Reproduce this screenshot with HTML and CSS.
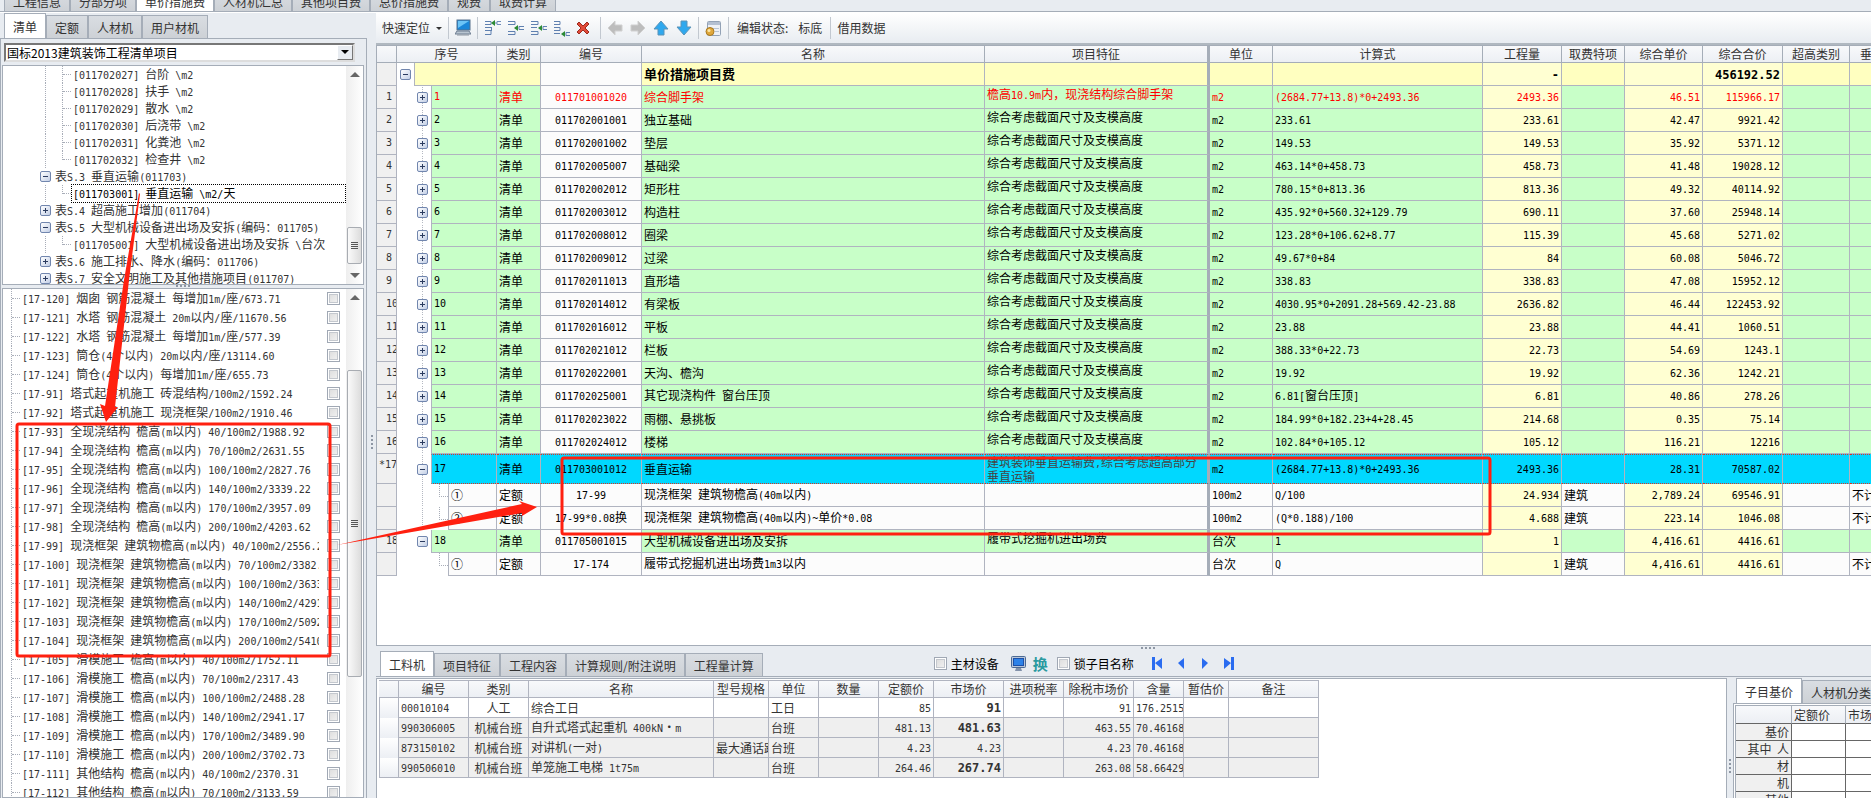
FILE: index.html
```html
<!DOCTYPE html>
<html lang="zh-CN">
<head>
<meta charset="utf-8">
<title>单价措施费</title>
<link rel="stylesheet" href="styles.css">
</head>
<body>
<nav class="tabs top-tabs">
  <button class="tab">工程信息</button><button class="tab">分部分项</button><button class="tab active">单价措施费</button><button class="tab">人材机汇总</button><button class="tab">其他项目费</button><button class="tab">总价措施费</button><button class="tab">规费</button><button class="tab">取费计算</button>
</nav>
<div class="workspace">
  <aside class="sidebar">
    <nav class="tabs side-tabs">
      <button class="tab active">清单</button><button class="tab">定额</button><button class="tab">人材机</button><button class="tab">用户材机</button>
    </nav>
    <div class="side-body">
      <div class="combo">
        <select aria-label="清单项目"><option>国标2013建筑装饰工程清单项目</option></select>
        <span class="combo-arrow"></span>
      </div>
      <div class="box outline-box">
        <div class="outline" id="outline"></div>
        <div class="scroll scroll-a"><i class="up"></i><b class="thumb"></b><i class="down"></i></div>
      </div>
      <div class="dots-h"><i></i><i></i><i></i><i></i></div>
      <div class="box quota-box">
        <div class="quota" id="quota"></div>
        <div class="scroll scroll-b"><i class="up"></i><b class="thumb"></b></div>
      </div>
    </div>
  </aside>
  <div class="dots-v"><i></i><i></i><i></i><i></i></div>
  <main class="main">
    <div class="toolbar">
      <button class="tool">快速定位<span class="caret"></span></button>
      <span class="sep"></span>
      <button class="tool" aria-label="计算机"><svg width="16" height="18" viewBox="0 0 16 18"><rect x="2" y="1" width="13" height="10" fill="#1a86d8" stroke="#57708c"/><path d="M3 2h11L3 9z" fill="#6cc4f6"/><path d="M2 12h12l2 3H0z" fill="#b8c4d0" stroke="#6c7c90"/><path d="M2 16h12" stroke="#8a94a0"/></svg></button>
      <span class="sep"></span>
      <button class="tool" aria-label="上方插入"><svg width="18" height="18" viewBox="0 0 18 18"><path d="M1 2.500h6v3H1M1 8.500h6M1 11.500h6v4H1M7.500 8v4" stroke="#5f80b0" fill="none"/><path d="M17 2.500h-4v3h4M10 4h3" stroke="#6f8cba" fill="none"/><path d="M7 4l4-3v6z" fill="#2c8a34"/></svg></button>
      <button class="tool" aria-label="插入"><svg width="18" height="18" viewBox="0 0 18 18"><path d="M1 2.500h7v3H1M1 12.500h7v3H1M8 9h3M17 7.500h-5v3h5" stroke="#5f80b0" fill="none"/><path d="M7 9l4-3v6z" fill="#2c8a34"/></svg></button>
      <button class="tool" aria-label="同级插入"><svg width="18" height="18" viewBox="0 0 18 18"><path d="M1 2.500h7v3H1M1 8.500h6M1 12.500h7v3H1M17 7.500h-4v3h4" stroke="#5f80b0" fill="none"/><path d="M8 9l4-3v6z" fill="#2c8a34"/></svg></button>
      <button class="tool" aria-label="下方插入"><svg width="18" height="18" viewBox="0 0 18 18"><path d="M1 2.500h6v3H1M1 8.500h6v3H1M1 14.500h6M17 13.500h-4v3h4" stroke="#5f80b0" fill="none"/><path d="M8 15l4-3v6z" fill="#2c8a34"/></svg></button>
      <button class="tool del" aria-label="删除"><svg width="14" height="14" viewBox="0 0 14 14"><path d="M1 3l2-2 4 4 4-4 2 2-4 4 4 4-2 2-4-4-4 4-2-2 4-4z" fill="#e04a38" stroke="#9c2a1e"/></svg></button>
      <span class="sep"></span>
      <button class="tool" aria-label="左移"><svg width="16" height="16" viewBox="0 0 16 16"><path d="M8 1v4h7v6H8v4L1 8z" fill="#bdbdbd" stroke="#d0d0d0"/></svg></button>
      <button class="tool" aria-label="右移"><svg width="16" height="16" viewBox="0 0 16 16"><path d="M8 1v4H1v6h7v4l7-7z" fill="#bdbdbd" stroke="#d0d0d0"/></svg></button>
      <button class="tool" aria-label="上移"><svg width="16" height="16" viewBox="0 0 16 16"><path d="M8 1l7 8h-4v6H5V9H1z" fill="#2fa8ee" stroke="#5b93b8"/></svg></button>
      <button class="tool" aria-label="下移"><svg width="16" height="16" viewBox="0 0 16 16"><path d="M8 15l7-8h-4V1H5v6H1z" fill="#2fa8ee" stroke="#5b93b8"/></svg></button>
      <span class="sep"></span>
      <button class="tool" aria-label="费用"><svg width="17" height="17" viewBox="0 0 17 17"><rect x="2.500" y="1.500" width="13" height="14" rx="1" fill="#eef1f6" stroke="#93a2b6"/><path d="M3 3.500h12" stroke="#b4c0d2" stroke-width="3"/><path d="M8 8.500h6M10 11.500h4" stroke="#b8c4d4"/><circle cx="5" cy="11.500" r="4" fill="#e0a83c" stroke="#a87820"/><circle cx="4" cy="10.500" r="1.500" fill="#fbe6a8"/></svg></button>
      <span class="sep"></span>
      <span class="tool-text">编辑状态:</span>
      <button class="tool mark">标底</button>
      <span class="sep"></span>
      <button class="tool">借用数据</button>
    </div>
    <div class="grid-pane">
      <table class="grid">
        <colgroup><col class="w20"><col class="w100"><col class="w44"><col class="w101"><col class="w343"><col class="w225"><col class="w63"><col class="w210"><col class="w79"><col class="w63"><col class="w78"><col class="w80"><col class="w67"><col class="w68"></colgroup>
        <thead><tr><th></th><th>序号</th><th>类别</th><th>编号</th><th>名称</th><th class="thick">项目特征</th><th>单位</th><th>计算式</th><th>工程量</th><th>取费特项</th><th>综合单价</th><th>综合合价</th><th>超高类别</th><th class="cut">垂</th></tr></thead>
        <tbody id="grid"></tbody>
      </table>
    </div>
    <div class="dots-h wide"><i></i><i></i><i></i><i></i></div>
    <div class="detail-bar">
      <nav class="tabs detail-tabs">
        <button class="tab active">工料机</button><button class="tab">项目特征</button><button class="tab">工程内容</button><button class="tab">计算规则/附注说明</button><button class="tab">工程量计算</button>
      </nav>
      <div class="options">
        <label class="check"><input type="checkbox">主材设备</label>
        <button class="tool" aria-label="显示"><svg width="15" height="16" viewBox="0 0 15 16"><rect x=".5" y=".5" width="14" height="11" rx="1" fill="#b9c6d8" stroke="#4c6a94"/><rect x="2.500" y="2.500" width="10" height="7" fill="#2d82e8" stroke="#1c50a8"/><path d="M5 12h5l1 3H4z" fill="#8292aa"/></svg></button>
        <button class="tool swap">换</button>
        <label class="check"><input type="checkbox">锁子目名称</label>
        <div class="pager">
          <button aria-label="第一条"><svg width="10" height="13" viewBox="0 0 10 13"><path d="M0 0h3v13H0zM10 1v11L3 6z" fill="#2a6cf0"/></svg></button>
          <button aria-label="上一条"><svg width="10" height="13" viewBox="0 0 10 13"><path d="M8 1v11L2 6z" fill="#2a6cf0"/></svg></button>
          <button aria-label="下一条"><svg width="10" height="13" viewBox="0 0 10 13"><path d="M2 1v11l6-6z" fill="#2a6cf0"/></svg></button>
          <button aria-label="最后一条"><svg width="10" height="13" viewBox="0 0 10 13"><path d="M7 0h3v13H7zM0 1v11l7-6z" fill="#2a6cf0"/></svg></button>
        </div>
      </div>
    </div>
    <div class="detail">
      <div class="detail-pane">
        <table class="parts">
          <colgroup><col class="w20"><col class="w70"><col class="w60"><col class="w185"><col class="w55"><col class="w50"><col class="w60"><col class="w55"><col class="w70"><col class="w60"><col class="w70"><col class="w50"><col class="w45"><col class="w90"></colgroup>
          <thead><tr><th></th><th>编号</th><th>类别</th><th>名称</th><th>型号规格</th><th>单位</th><th>数量</th><th>定额价</th><th>市场价</th><th>进项税率</th><th>除税市场价</th><th>含量</th><th>暂估价</th><th>备注</th></tr></thead>
          <tbody id="parts"></tbody>
        </table>
      </div>
      <div class="dots-v low"><i></i><i></i><i></i><i></i></div>
      <section class="price">
        <nav class="tabs price-tabs"><button class="tab active">子目基价</button><button class="tab">人材机分类</button></nav>
        <div class="price-body">
          <table class="base">
            <colgroup><col class="w56"><col class="w54"><col class="w54"></colgroup>
            <thead><tr><th></th><th>定额价</th><th>市场价</th></tr></thead>
            <tbody>
              <tr><th>基价</th><td></td><td></td></tr>
              <tr><th>其中&nbsp; 人</th><td></td><td></td></tr>
              <tr><th>材</th><td></td><td></td></tr>
              <tr><th>机</th><td></td><td></td></tr>
              <tr><th>其他</th><td></td><td></td></tr>
            </tbody>
          </table>
        </div>
      </section>
    </div>
  </main>
</div>
<svg class="marks" width="1871" height="798" viewBox="0 0 1871 798" aria-hidden="true">
  <g fill="none" stroke="#ff2010" stroke-width="3">
    <rect x="17" y="424" width="313" height="232" rx="2"/>
    <rect x="562" y="458" width="928" height="76" rx="2"/>
  </g>
  <g fill="#ff2010">
    <path d="M139 193l1 1-11 86-14 127 3 0-12 15-6-18 5 2 19-126z"/>
    <path d="M337 545l185-41-3-3 18 6-15 9 0-3z"/>
  </g>
</svg>
<script src="app.js"></script>
</body>
</html>
```
FILE: styles.css
```css
* { box-sizing: border-box; }
body {
  margin: 0;
  height: 100vh;
  overflow: hidden;
  display: flex;
  flex-direction: column;
  background: #e8ecf1;
  color: #333;
  font: 12px/16px "Noto Sans CJK SC", sans-serif;
}
button, select, input { font: inherit; color: inherit; margin: 0; padding: 0; }
button { background: none; border: 0; white-space: nowrap; }
.n { font-family: "DejaVu Sans Mono", monospace; font-size: 10px; }

/* tabs */
.tabs { display: flex; align-items: flex-end; flex: none; }
.tab {
  flex: none;
  height: 23px;
  padding: 2px 8px 0;
  border: 1px solid #a5adb8;
  border-bottom: 0;
  background: linear-gradient(#d9dde2, #cdd1d6);
}
.tab.active { height: 25px; background: #fff; }
.top-tabs {
  height: 12px;
  padding-left: 4px;
  overflow: hidden;
  border-bottom: 1px solid #a5adb8;
}
.top-tabs .tab { height: 20px; padding-top: 0; }
.workspace {
  flex: 1;
  min-height: 0;
  display: flex;
  border-top: 1px solid #fff;
}

/* sidebar */
.sidebar { flex: none; width: 367px; display: flex; flex-direction: column; min-height: 0; }
.side-tabs { padding-left: 4px; }
.side-body {
  flex: 1;
  min-height: 0;
  padding: 4px 2px 0 1px;
  border: 1px solid #a5adb8;
  border-bottom: 0;
  display: flex;
  flex-direction: column;
}
.combo {
  position: relative;
  flex: none;
  width: 351px;
  height: 19px;
  margin: 0 0 3px 2px;
  background: #fff;
  border: 2px solid #777;
  border-right-color: #ddd;
  border-bottom-color: #ddd;
}
.combo select {
  display: block;
  width: 100%;
  height: 15px;
  line-height: 15px;
  padding-left: 1px;
  border: 0;
  color: #000;
  background: none;
  appearance: none;
}
.combo-arrow {
  position: absolute;
  right: 0;
  top: 0;
  width: 16px;
  height: 15px;
  background: #e8ecf1;
  border: 1px solid #fff;
  border-right-color: #777;
  border-bottom-color: #777;
  pointer-events: none;
}
.combo-arrow::after {
  content: "";
  display: block;
  margin: 4px 3px;
  border: 4px solid transparent;
  border-top-color: #000;
  border-bottom: 0;
}
.box { display: flex; border: 1px solid #a5adb8; background: #fff; overflow: hidden; }
.outline-box { flex: none; height: 220px; }
.outline, .quota { flex: 1; min-width: 0; overflow: hidden; }
.leaf, .branch { display: flex; align-items: center; height: 17px; white-space: pre; }
.guide { flex: none; align-self: stretch; }
.vline { width: 0; border-left: 1px dotted #a8adb8; }
.leaf .g1 { width: 42px; }
.leaf .g2 { width: 16px; }
.leaf .g3 { width: 8px; height: 0; align-self: center; border-top: 1px dotted #a8adb8; }
.leaf .g2 + .vline.end { height: 9px; }
.leaf .text { padding-left: 1px; line-height: 15px; border: 1px solid transparent; }
.leaf.selected .text { flex: 1; color: #000; border: 1px dotted #000; }
.branch { padding-left: 37px; gap: 4px; }
.expander {
  flex: none;
  width: 11px;
  height: 11px;
  border: 1px solid #7186ae;
  border-radius: 2px;
  background:
    linear-gradient(#2c3c60, #2c3c60) center / 5px 1px no-repeat,
    linear-gradient(135deg, #fff, #c3cfe6);
}
.expander.plus {
  background:
    linear-gradient(#2c3c60, #2c3c60) center / 5px 1px no-repeat,
    linear-gradient(#2c3c60, #2c3c60) center / 1px 5px no-repeat,
    linear-gradient(135deg, #fff, #c3cfe6);
}
.quota-box { flex: 1; min-height: 0; }
.item { display: flex; align-items: center; height: 19px; padding-left: 8px; white-space: pre; }
.item .g3 { width: 8px; border-top: 1px dotted #a8adb8; }
.item label { flex: none; width: 299px; padding-left: 2px; overflow: hidden; }
input[type="checkbox"] {
  appearance: none;
  flex: none;
  width: 13px;
  height: 13px;
  border: 1px solid #a0a8b4;
  background: linear-gradient(135deg, #dcdcdc, #f2f2f2) center / 9px 9px no-repeat, #fff;
  box-shadow: inset 0 0 0 1px #fff, inset 0 0 0 2px #c4c8ce;
}
.item input { margin-left: 8px; }
.scroll {
  flex: none;
  width: 17px;
  display: flex;
  flex-direction: column;
  align-items: center;
  padding: 6px 0;
  background: linear-gradient(90deg, #eee, #fff);
}
.scroll .up { border: 5px solid transparent; border-top: 0; border-bottom-color: #666; }
.scroll .down { border: 5px solid transparent; border-bottom: 0; border-top-color: #666; margin-top: 9px; }
.thumb {
  width: 15px;
  border: 1px solid #a8acb2;
  border-radius: 2px;
  background:
    repeating-linear-gradient(#555 0 1px, transparent 1px 2px) center / 7px 7px no-repeat,
    linear-gradient(90deg, #fafafa, #dcdcdc);
}
.scroll-a .thumb { height: 37px; margin-top: 150px; }
.scroll-b .thumb { height: 307px; margin-top: 70px; }

/* splitters */
.dots-h, .dots-v { flex: none; display: flex; justify-content: center; gap: 2px; }
.dots-h { height: 3px; }
.dots-h i, .dots-v i { width: 2px; height: 2px; background: #8e97a4; }
.dots-h.wide { height: 5px; padding: 1px 0 0 48px; }
.dots-v { width: 9px; flex-direction: column; align-items: center; padding-top: 72px; }
.dots-v.low { width: 6px; padding-top: 56px; }

/* toolbar */
.main { flex: 1; min-width: 0; display: flex; flex-direction: column; }
.toolbar {
  flex: none;
  display: flex;
  align-items: center;
  height: 32px;
  padding: 0 6px;
  background: linear-gradient(#fff, #e8ecf1);
  border-bottom: 2px solid #b0b8c0;
}
.tool { display: flex; align-items: center; }
.toolbar .tool + .tool { margin-left: 6px; }
.toolbar .tool[aria-label*="插入"] + .tool { margin-left: 5px; }
.toolbar .tool.del { margin: 0 4px 0 2px; }
.toolbar .tool[aria-label*="移"] + .tool { margin-left: 7px; }
.caret { margin-left: 6px; border: 3px solid transparent; border-top-color: #333; border-bottom: 0; }
.sep { width: 1px; height: 22px; margin: 0 6px; background: #c2c8d0; }
.tool-text { margin: 0 10px 0 2px; white-space: nowrap; }
.toolbar .mark { margin-right: 2px; }

/* main grid */
.grid-pane { flex: 1; min-height: 0; overflow: hidden; background: #fff; border: 1px solid #a5adb8; border-top: 0; border-right: 0; }
table { table-layout: fixed; border-spacing: 0; width: 0; }
th { font-weight: normal; }
th, td { padding: 0; overflow: hidden; white-space: pre; }
.w20 { width: 20px; } .w44 { width: 44px; } .w45 { width: 45px; } .w50 { width: 50px; }
.w54 { width: 54px; } .w55 { width: 55px; } .w56 { width: 56px; } .w60 { width: 60px; }
.w63 { width: 63px; } .w67 { width: 67px; } .w68 { width: 68px; } .w70 { width: 70px; }
.w78 { width: 78px; } .w79 { width: 79px; } .w80 { width: 80px; } .w90 { width: 90px; }
.w100 { width: 100px; } .w101 { width: 101px; } .w185 { width: 185px; } .w210 { width: 210px; }
.w225 { width: 225px; } .w343 { width: 343px; }
.grid thead th {
  height: 18px;
  border: 1px solid #a5adb8;
  border-width: 1px 1px 1px 0;
  background: linear-gradient(#f8f9fb, #eceff4);
}
.grid th.cut { text-align: left; padding-left: 10px; }
.grid td, .grid tbody th { height: 23px; border: 1px solid #b0b4c0; border-width: 0 1px 1px 0; }
.grid tbody th { padding: 1px 0 0 9px; text-align: left; vertical-align: top; background: #f0f0f0; }
.grid tbody th.star { padding-left: 2px; }
.grid td { padding: 0 2px; line-height: 16px; color: #000; background: #c8ffc8; }
.grid td.code { text-align: center; background: #fcfcfc; }
.grid td.money { text-align: right; background: #ffffd2; }
.grid td.feature { vertical-align: top; padding-top: 2px; line-height: 12px; white-space: normal; }
.grid .thick { border-right: 3px solid #a5adb8; }
.grid .sum td { background: #ffffc0; font-weight: bold; }
.grid .sum td.code { background: #fcfcfc; }
.grid .sum td.money { background: #ffffd2; }
.grid .sum td.title { font-size: 13px; }
.grid .sum .n { font-size: 12px; }
.grid .sub td { background: #fcfcfc; }
.grid .sub td.money { background: #ffffd2; }
.grid .alert td { color: #f00; }
.grid .current td, .grid .current th { height: 30px; }
.grid .current td, .grid .current td .cell {
  background: #00d8ff;
  border-top: 1px dotted #e03020;
  border-bottom: 1px dotted #e03020;
}
.grid .current td.feature { padding-top: 1px; color: #444; }
.grid td.tree, .grid .current td.tree { padding: 0; height: 23px; border-top: 0; border-bottom: 0; background: #fff; }
.tree-row { display: flex; height: 23px; }
.current .tree-row { height: 30px; }
.indent { flex: none; display: flex; align-items: center; width: 34px; padding-left: 20px; }
.indent.root { width: 17px; padding-left: 3px; }
.indent.line { background: linear-gradient(#fff 50%, #b4b8c2 0) 25px 0 / 1px 2px repeat-y; }
.indent.child { width: 51px; padding-left: 42px; }
.indent.child::before {
  content: "";
  align-self: flex-start;
  width: 9px;
  height: 12px;
  border: 1px dotted #a8adb8;
  border-width: 0 0 1px 1px;
}
.cell { flex: 1; display: flex; align-items: center; padding-left: 2px; border-left: 1px solid #b0b4c0; border-bottom: 1px solid #b0b4c0; background: #c8ffc8; }
.sum .cell { background: #ffffc0; }
.sub .cell { background: #fcfcfc; }

/* detail area */
.detail-bar { flex: none; display: flex; align-items: flex-end; height: 25px; padding-left: 4px; }
.options { display: flex; align-items: center; height: 25px; margin-left: 171px; color: #000; }
.check { display: flex; align-items: center; gap: 4px; white-space: nowrap; }
.options .tool { margin-left: 12px; }
.options .swap { margin: 0 9px 0 7px; font-size: 15px; font-weight: bold; color: #2a9aa0; }
.pager { display: flex; gap: 14px; margin-left: 18px; }
.pager svg { display: block; }
.detail { flex: none; display: flex; height: 122px; border-top: 1px solid #a5adb8; }
.detail-pane { flex: 1; min-width: 0; margin-top: 1px; padding: 1px 0 0 2px; overflow: hidden; background: #fff; border: 1px solid #a5adb8; border-bottom: 0; }
.parts th, .parts td { height: 20px; border: 1px solid #b0b4c0; border-width: 0 1px 1px 0; }
.parts thead th { height: 18px; border-top-width: 1px; background: linear-gradient(#f8f9fb, #eceff4); }
.parts tbody th { border-bottom: 0; border-left: 1px solid #b0b4c0; background: linear-gradient(#fff, #eceff4); }
.parts tbody tr:last-child th { border-bottom: 1px solid #b0b4c0; }
.parts td { padding: 0 2px; background: #efefef; }
.parts tr:first-child td { background: #fff; }
.parts .mid { text-align: center; }
.parts .right { text-align: right; }
.parts .strong, .parts .strong .n { font-weight: bold; font-size: 12px; }
.price { flex: none; width: 138px; display: flex; flex-direction: column; overflow: hidden; }
.price-tabs { height: 26px; padding-left: 3px; }
.price-body { flex: 1; padding: 1px 0 0 1px; border: 1px solid #a5adb8; border-width: 1px 0 0 1px; overflow: hidden; background: #fff; }
.base { border-left: 1px solid #a5adb8; }
.base th, .base td { height: 17px; line-height: 16px; border: 1px solid #666; border-width: 0 1px 1px 0; }
.base thead th { height: 19px; padding-left: 2px; text-align: left; border-color: #a5adb8; border-top-width: 1px; border-bottom-color: #666; background: linear-gradient(#f8f9fb, #eceff4); }
.base tbody th { padding-right: 2px; text-align: right; background: #f0f0f0; }

.marks { position: absolute; left: 0; top: 0; pointer-events: none; }
```
FILE: app.js
```js
const esc = s => s.replace(/&/g, '&amp;').replace(/</g, '&lt;');
// Latin runs are set in the monospaced face beside the Chinese text.
const mix = s => esc(s).replace(/[\x20-\x7e]+/g, '<span class="n">$&</span>');

const outline = [
  ['leaf', '[011702027] 台阶 \\m2'],
  ['leaf', '[011702028] 扶手 \\m2'],
  ['leaf', '[011702029] 散水 \\m2'],
  ['leaf', '[011702030] 后浇带 \\m2'],
  ['leaf', '[011702031] 化粪池 \\m2'],
  ['leaf end', '[011702032] 检查井 \\m2'],
  ['minus', '表S.3 垂直运输(011703)'],
  ['leaf end selected', '[011703001] 垂直运输 \\m2/天'],
  ['plus', '表S.4 超高施工增加(011704)'],
  ['minus', '表S.5 大型机械设备进出场及安拆(编码：011705)'],
  ['leaf end', '[011705001] 大型机械设备进出场及安拆 \\台次'],
  ['plus', '表S.6 施工排水、降水(编码：011706)'],
  ['plus', '表S.7 安全文明施工及其他措施项目(011707)']
];
document.getElementById('outline').innerHTML = outline.map(([kind, text]) =>
  kind.startsWith('leaf')
    ? `<div class="${kind}"><i class="guide g1"></i><i class="guide vline"></i><i class="guide g2"></i><i class="guide vline${kind.includes('end') ? ' end' : ''}"></i><i class="guide g3"></i><span class="text">${mix(text)}</span></div>`
    : `<div class="branch"><i class="expander ${kind}"></i><span>${mix(text)}</span></div>`
).join('');

const quota = [
  '[17-120] 烟囱 钢筋混凝土 每增加1m/座/673.71',
  '[17-121] 水塔 钢筋混凝土 20m以内/座/11670.56',
  '[17-122] 水塔 钢筋混凝土 每增加1m/座/577.39',
  '[17-123] 筒仓(4个以内) 20m以内/座/13114.60',
  '[17-124] 筒仓(4个以内) 每增加1m/座/655.73',
  '[17-91] 塔式起重机施工 砖混结构/100m2/1592.24',
  '[17-92] 塔式起重机施工 现浇框架/100m2/1910.46',
  '[17-93] 全现浇结构 檐高(m以内) 40/100m2/1988.92',
  '[17-94] 全现浇结构 檐高(m以内) 70/100m2/2631.55',
  '[17-95] 全现浇结构 檐高(m以内) 100/100m2/2827.76',
  '[17-96] 全现浇结构 檐高(m以内) 140/100m2/3339.22',
  '[17-97] 全现浇结构 檐高(m以内) 170/100m2/3957.09',
  '[17-98] 全现浇结构 檐高(m以内) 200/100m2/4203.62',
  '[17-99] 现浇框架 建筑物檐高(m以内) 40/100m2/2556.2',
  '[17-100] 现浇框架 建筑物檐高(m以内) 70/100m2/3382.',
  '[17-101] 现浇框架 建筑物檐高(m以内) 100/100m2/3633',
  '[17-102] 现浇框架 建筑物檐高(m以内) 140/100m2/4291',
  '[17-103] 现浇框架 建筑物檐高(m以内) 170/100m2/5092',
  '[17-104] 现浇框架 建筑物檐高(m以内) 200/100m2/5410',
  '[17-105] 滑模施工 檐高(m以内) 40/100m2/1752.11',
  '[17-106] 滑模施工 檐高(m以内) 70/100m2/2317.43',
  '[17-107] 滑模施工 檐高(m以内) 100/100m2/2488.28',
  '[17-108] 滑模施工 檐高(m以内) 140/100m2/2941.17',
  '[17-109] 滑模施工 檐高(m以内) 170/100m2/3489.90',
  '[17-110] 滑模施工 檐高(m以内) 200/100m2/3702.73',
  '[17-111] 其他结构 檐高(m以内) 40/100m2/2370.31',
  '[17-112] 其他结构 檐高(m以内) 70/100m2/3133.59'
];
document.getElementById('quota').innerHTML = quota.map((text, i) =>
  `<div class="item"><i class="guide vline"></i><i class="g3"></i><label for="q${i}">${mix(text)}</label><input type="checkbox" id="q${i}"></div>`
).join('');

// [row class, header, 序号, 类别, 编号, 名称, 特征, 单位, 计算式, 工程量, 取费, 单价, 合价, 末列]
const F = '综合考虑截面尺寸及支模高度';
const rows = [
  ['sum', '', '', '', '', '单价措施项目费', '', '', '', '-', '', '', '456192.52', ''],
  ['alert', '1', '1', '清单', '011701001020', '综合脚手架', '檐高10.9m内，现浇结构综合脚手架', 'm2', '(2684.77+13.8)*0+2493.36', '2493.36', '', '46.51', '115966.17', ''],
  ['', '2', '2', '清单', '011702001001', '独立基础', F, 'm2', '233.61', '233.61', '', '42.47', '9921.42', ''],
  ['', '3', '3', '清单', '011702001002', '垫层', F, 'm2', '149.53', '149.53', '', '35.92', '5371.12', ''],
  ['', '4', '4', '清单', '011702005007', '基础梁', F, 'm2', '463.14*0+458.73', '458.73', '', '41.48', '19028.12', ''],
  ['', '5', '5', '清单', '011702002012', '矩形柱', F, 'm2', '780.15*0+813.36', '813.36', '', '49.32', '40114.92', ''],
  ['', '6', '6', '清单', '011702003012', '构造柱', F, 'm2', '435.92*0+560.32+129.79', '690.11', '', '37.60', '25948.14', ''],
  ['', '7', '7', '清单', '011702008012', '圈梁', F, 'm2', '123.28*0+106.62+8.77', '115.39', '', '45.68', '5271.02', ''],
  ['', '8', '8', '清单', '011702009012', '过梁', F, 'm2', '49.67*0+84', '84', '', '60.08', '5046.72', ''],
  ['', '9', '9', '清单', '011702011013', '直形墙', F, 'm2', '338.83', '338.83', '', '47.08', '15952.12', ''],
  ['', '10', '10', '清单', '011702014012', '有梁板', F, 'm2', '4030.95*0+2091.28+569.42-23.88', '2636.82', '', '46.44', '122453.92', ''],
  ['', '11', '11', '清单', '011702016012', '平板', F, 'm2', '23.88', '23.88', '', '44.41', '1060.51', ''],
  ['', '12', '12', '清单', '011702021012', '栏板', F, 'm2', '388.33*0+22.73', '22.73', '', '54.69', '1243.1', ''],
  ['', '13', '13', '清单', '011702022001', '天沟、檐沟', F, 'm2', '19.92', '19.92', '', '62.36', '1242.21', ''],
  ['', '14', '14', '清单', '011702025001', '其它现浇构件 窗台压顶', F, 'm2', '6.81[窗台压顶]', '6.81', '', '40.86', '278.26', ''],
  ['', '15', '15', '清单', '011702023022', '雨棚、悬挑板', F, 'm2', '184.99*0+182.23+4+28.45', '214.68', '', '0.35', '75.14', ''],
  ['', '16', '16', '清单', '011702024012', '楼梯', F, 'm2', '102.84*0+105.12', '105.12', '', '116.21', '12216', ''],
  ['current', '*17', '17', '清单', '011703001012', '垂直运输', '建筑装饰垂直运输费,综合考虑超高部分垂直运输', 'm2', '(2684.77+13.8)*0+2493.36', '2493.36', '', '28.31', '70587.02', ''],
  ['sub cont', '', '①', '定额', '17-99', '现浇框架 建筑物檐高(40m以内)', '', '100m2', 'Q/100', '24.934', '建筑', '2,789.24', '69546.91', '不计'],
  ['sub cont', '', '②', '定额', '17-99*0.08换', '现浇框架 建筑物檐高(40m以内)~单价*0.08', '', '100m2', '(Q*0.188)/100', '4.688', '建筑', '223.14', '1046.08', '不计'],
  ['', '18', '18', '清单', '011705001015', '大型机械设备进出场及安拆', '履带式挖掘机进出场费', '台次', '1', '1', '', '4,416.61', '4416.61', ''],
  ['sub', '', '①', '定额', '17-174', '履带式挖掘机进出场费1m3以内', '', '台次', 'Q', '1', '建筑', '4,416.61', '4416.61', '不计']
];
const indent = r => {
  if (r[0] === 'sum') return '<span class="indent root"><i class="expander"></i></span>';
  if (r[0].startsWith('sub')) return `<span class="indent child${r[0].includes('cont') ? ' line' : ''}"></span>`;
  const open = r[2] === '17' || r[2] === '18';
  return `<span class="indent${r[2] === '18' ? '' : ' line'}"><i class="expander${open ? '' : ' plus'}"></i></span>`;
};
const cls = { 4: 'code', 5: 'title', 6: 'feature thick', 9: 'money', 11: 'money', 12: 'money' };
document.getElementById('grid').innerHTML = rows.map(r => {
  let h = `<tr class="${r[0]}"><th class="${r[1][0] === '*' ? 'star' : ''}">${mix(r[1])}</th>`;
  h += `<td class="tree"><div class="tree-row">${indent(r)}<span class="cell">${mix(r[2])}</span></div></td>`;
  for (let i = 3; i <= 12; i++) h += `<td class="${cls[i] || ''}">${mix(r[i])}</td>`;
  return h + `<td></td><td>${r[13]}</td></tr>`;
}).join('');

const parts = [
  ['00010104', '人工', '综合工日', '', '工日', '', '85', '91', '', '91', '176.2515', '', ''],
  ['990306005', '机械台班', '自升式塔式起重机 400kN·m', '', '台班', '', '481.13', '481.63', '', '463.55', '70.46168', '', ''],
  ['873150102', '机械台班', '对讲机(一对)', '最大通话距', '台班', '', '4.23', '4.23', '', '4.23', '70.46168', '', ''],
  ['990506010', '机械台班', '单笼施工电梯 1t75m', '', '台班', '', '264.46', '267.74', '', '263.08', '58.66429', '', '']
];
document.getElementById('parts').innerHTML = parts.map((r, n) =>
  '<tr><th></th>' + r.map((v, i) => {
    const c = i === 1 ? 'mid' : [6, 7, 9].includes(i) ? 'right' : '';
    return `<td class="${c}${i === 7 && n !== 2 ? ' strong' : ''}">${mix(v)}</td>`;
  }).join('') + '</tr>'
).join('');
```
